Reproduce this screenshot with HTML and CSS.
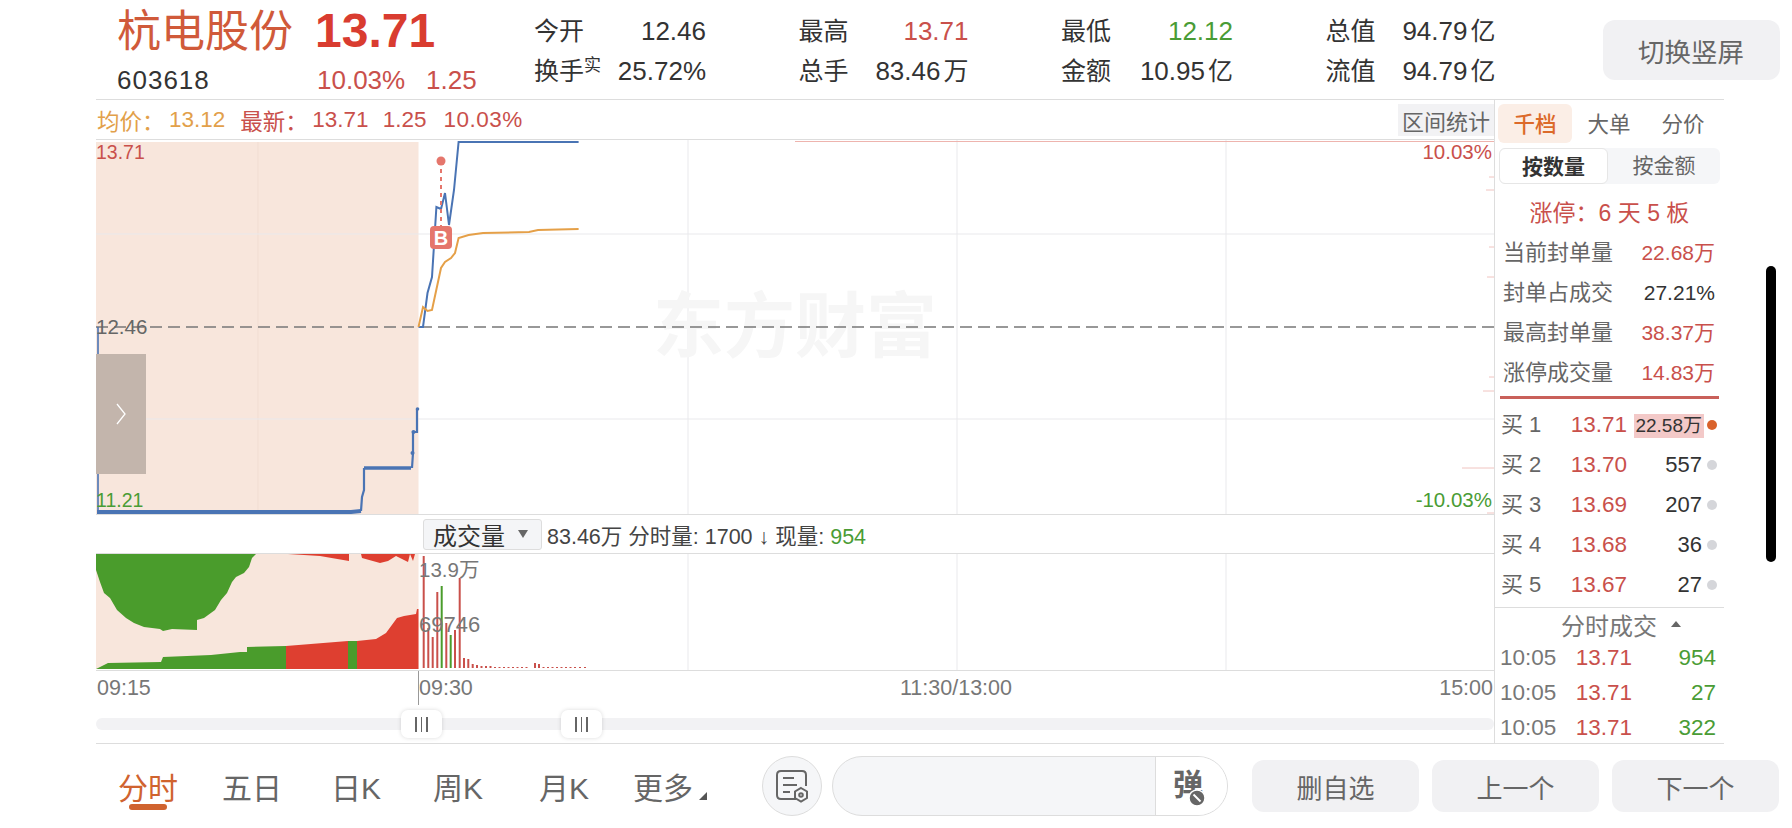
FILE: index.html
```html
<!DOCTYPE html>
<html lang="zh-CN">
<head>
    <meta charset="UTF-8">
    <meta name="viewport" content="width=device-width, initial-scale=1.0">
    <title>杭电股份 603618</title>
    <link rel="stylesheet" href="styles.css">
</head>
<body>
    <div class="screen">
        <!-- HEADER -->
        <header class="top">
            <div class="quote">
                <div class="quote-row first">
                    <span class="name">杭电股份</span>
                    <span class="price">13.71</span>
                </div>
                <div class="quote-row second">
                    <span class="code">603618</span>
                    <span class="change red">10.03%</span>
                    <span class="change-abs red">1.25</span>
                </div>
            </div>
            <div class="stats">
                <div class="stat"><span>今开</span><span>12.46</span></div>
                <div class="stat"><span>最高</span><span class="red">13.71</span></div>
                <div class="stat"><span>最低</span><span class="green">12.12</span></div>
                <div class="stat"><span>总值</span><span>94.79<span class="u">亿</span></span></div>
                <div class="stat"><span>换手<sup>实</sup></span><span>25.72%</span></div>
                <div class="stat"><span>总手</span><span>83.46<span class="u">万</span></span></div>
                <div class="stat"><span>金额</span><span>10.95<span class="u">亿</span></span></div>
                <div class="stat"><span>流值</span><span>94.79<span class="u">亿</span></span></div>
            </div>
            <button class="rotate-btn" type="button">切换竖屏</button>
        </header>

        <main class="main">
            <section class="chart-col">
                <div class="info-row">
                    <span class="orange info-label">均价：</span><span class="orange info-val">13.12</span>
                    <span class="red info-label">最新：</span>
                    <span class="red info-val">13.71</span>
                    <span class="red info-val">1.25</span>
                    <span class="red info-pct">10.03%</span>
                    <button class="range-btn" type="button">区间统计</button>
                </div>

                <!-- PRICE CHART -->
                <div class="price-chart">
                    <svg class="plot" viewBox="96 140 1398 374" width="1398" height="374">
                        <rect x="96" y="142" width="322.5" height="372" fill="#f8e6dc"/>
                        <path d="M258 142V512" stroke="#f1ddd2" fill="none"/>
                        <path d="M688 140V514M957 140V514M1226 140V514M96 234H1494M96 419H1494" stroke="#e9e9ec" fill="none"/>
                        <text class="watermark" x="795" y="351" text-anchor="middle">东方财富</text>
                        <path d="M795 141.5H1494" stroke="#eeb4ae" fill="none"/>
                        <path d="M1489 177H1494M1486 190H1494M1489 247H1494M1487 277H1494M1489 377H1494M1483 391H1494M1462 468H1494M1487 513H1494" stroke="#f0c4c0" fill="none"/>
                        <path d="M96 327H1494" stroke="#777" stroke-width="1.4" stroke-dasharray="12 6" fill="none"/>
                        <!-- pre-market -->
                        <path d="M98 327V512" stroke="#4a74b4" stroke-width="1.6" fill="none"/>
                        <path d="M97 512H351L361 511" stroke="#4a74b4" stroke-width="4" fill="none"/>
                        <path d="M361 511L362 497L364 490V468" stroke="#4a74b4" stroke-width="2.2" fill="none"/>
                        <path d="M364 468H411" stroke="#4a74b4" stroke-width="3.6" fill="none"/>
                        <path d="M412 468L413 453V432H417V409" stroke="#4a74b4" stroke-width="2.2" fill="none"/>
                        <circle cx="417.5" cy="409" r="1.8" fill="#4a74b4"/>
                        <circle cx="413.5" cy="432" r="2" fill="#4a74b4"/>
                        <circle cx="412.5" cy="453" r="2" fill="#4a74b4"/>
                        <!-- after open -->
                        <path d="M418.5 327H423L427.5 293L432 277L436.4 207L441 209L445 193L449 225L454 190L458.6 142H578.6" stroke="#4a74b4" stroke-width="2" fill="none"/>
                        <path d="M418.5 327L423 307L427.5 311L432 310L441 268L445 262L451 258L455 253L458.6 238L468.6 235L483 233L529 232L538 230L578.6 229" stroke="#e5a048" stroke-width="2" fill="none"/>
                        <!-- buy marker -->
                        <path d="M441 161V228" stroke="#e5766c" stroke-width="2" stroke-dasharray="4 4" fill="none"/>
                        <circle cx="441" cy="161" r="4.5" fill="#e5766c"/>
                        <rect x="430" y="226" width="22" height="23" rx="4" fill="#e5766c"/>
                        <text class="buy-mark" x="441" y="244.5" text-anchor="middle">B</text>
                    </svg>
                    <span class="axis-label left red top-val">13.71</span>
                    <span class="axis-label left mid-val">12.46</span>
                    <span class="axis-label left green low-val">11.21</span>
                    <span class="axis-label right red top-val">10.03%</span>
                    <span class="axis-label right green low-val">-10.03%</span>
                    <div class="drawer-tab">
                        <svg width="14" height="24" viewBox="0 0 14 24"><path d="M3 2L11 12L3 22" fill="none" stroke="#fff" stroke-width="1.3"/></svg>
                    </div>
                </div>

                <!-- VOLUME HEADER -->
                <div class="vol-head">
                    <div class="vol-select"><span>成交量</span><i class="tri-down"></i></div>
                    <span class="vol-text">83.46万 分时量: 1700 ↓ 现量: <span class="green">954</span></span>
                </div>

                <!-- VOLUME CHART -->
                <div class="vol-chart">
                    <svg class="plot" viewBox="96 554 1398 116" width="1398" height="116">
                        <rect x="96" y="554" width="322.5" height="115" fill="#f8e6dc"/>
                        <path d="M688 554V670M957 554V670M1226 554V670" stroke="#e9e9ec" fill="none"/>
                        <path d="M96 554V570L100 582L104 593L110 598L117 610L126 618L134 623L144 627L160 629L163 631L172 629L197 630V620L204 618L215 610L221 600L227 593L232 582L236 577L244 573L249 567L252 558L256 554Z" fill="#4a9c2c"/>
                        <path d="M288 554L320 556L349 561V554H361L362 558L380 563L388 561L396 556L402 559L408 562L410 554L413 561L415 554H418V554Z" fill="#de3f30"/>
                        <path d="M96 669L108 663L161 662L163 657L211 655L240 652H247V647L286 646V669Z" fill="#4a9c2c"/>
                        <path d="M286 646L348 641V669H286Z" fill="#de3f30"/>
                        <path d="M348 641H357V669H348Z" fill="#4a9c2c"/>
                        <path d="M357 641L376 639L386 633L397 618L404 616L416 614L417 609H418.5V669H357Z" fill="#de3f30"/>
                        <path d="M423.7 668V556M428.3 668V628M432.7 668V637M437.3 668V592M446.3 668V623M455 668V630M459.7 668V578M464 668V658M468.3 668V659M472.7 668V664M477 668V665M481.5 668V666M486 668V666M490.5 668V666M495 668V667M499.5 668V667M504 668V667M508.5 668V667M513 668V667M517.5 668V667M522 668V667M526.5 668V667M535 668V663M539 668V664M543.5 668V667M548 668V667M552.5 668V667M557 668V667M561.5 668V667M566 668V667M570.5 668V667M575 668V667M580 668V667M585 668V667" stroke="#c9504b" stroke-width="2" fill="none"/>
                        <path d="M441.7 668V586M450.7 668V635" stroke="#4a9c2c" stroke-width="2" fill="none"/>
                    </svg>
                    <span class="vol-label vol-max">13.9万</span>
                    <span class="vol-label vol-mid">69746</span>
                </div>

                <!-- TIME AXIS -->
                <div class="time-axis">
                    <span class="t-first">09:15</span>
                    <span class="t-open">09:30</span>
                    <span>11:30/13:00</span>
                    <span class="t-end">15:00</span>
                </div>
                <div class="scroller">
                    <div class="track"></div>
                    <div class="handle handle-a"><i></i><i></i><i></i></div>
                    <div class="handle handle-b"><i></i><i></i><i></i></div>
                </div>
            </section>

            <!-- RIGHT PANEL -->
            <aside class="panel">
                <div class="tabs">
                    <span class="tab active">千档</span>
                    <span class="tab">大单</span>
                    <span class="tab">分价</span>
                </div>
                <div class="seg">
                    <span class="seg-item on">按数量</span>
                    <span class="seg-item">按金额</span>
                </div>
                <div class="limit-title">涨停：6 天 5 板</div>
                <div class="limit-row"><span>当前封单量</span><span class="red">22.68万</span></div>
                <div class="limit-row"><span>封单占成交</span><span>27.21%</span></div>
                <div class="limit-row"><span>最高封单量</span><span class="red">38.37万</span></div>
                <div class="limit-row"><span>涨停成交量</span><span class="red">14.83万</span></div>
                <div class="red-rule"></div>
                <div class="bids">
                    <div class="bid"><span>买 1</span><span class="red">13.71</span><span class="qty"><b class="qty-bar">22.58万</b></span><i class="dot hot"></i></div>
                    <div class="bid"><span>买 2</span><span class="red">13.70</span><span class="qty">557</span><i class="dot"></i></div>
                    <div class="bid"><span>买 3</span><span class="red">13.69</span><span class="qty">207</span><i class="dot"></i></div>
                    <div class="bid"><span>买 4</span><span class="red">13.68</span><span class="qty">36</span><i class="dot"></i></div>
                    <div class="bid"><span>买 5</span><span class="red">13.67</span><span class="qty">27</span><i class="dot"></i></div>
                </div>
                <div class="trades-head"><span>分时成交</span><i class="tri-up"></i></div>
                <div class="trade"><span>10:05</span><span class="red">13.71</span><span class="green">954</span></div>
                <div class="trade"><span>10:05</span><span class="red">13.71</span><span class="green">27</span></div>
                <div class="trade"><span>10:05</span><span class="red">13.71</span><span class="green">322</span></div>
            </aside>
        </main>

        <!-- BOTTOM BAR -->
        <footer class="bottom">
            <nav class="periods">
                <span class="period active">分时</span>
                <span class="period p-five">五日</span>
                <span class="period p-day">日K</span>
                <span class="period p-week">周K</span>
                <span class="period p-month">月K</span>
                <span class="period p-more">更多<i class="tri-corner"></i></span>
            </nav>
            <div class="note-btn">
                <svg width="34" height="34" viewBox="0 0 34 34" fill="none" stroke="#666" stroke-width="2">
                    <path d="M21 30H6Q2 30 2 26V6Q2 2 6 2H27Q31 2 31 6V17"/>
                    <path d="M8 9H19M8 16H22M8 23H15"/>
                    <path d="M26 19L32 22.5V29L26 32.5L20 29V22.5Z"/>
                    <circle cx="26" cy="26" r="1.8"/>
                </svg>
            </div>
            <div class="danmu">
                <div class="danmu-input"></div>
                <div class="danmu-toggle">
                    <span>弹</span>
                    <svg class="danmu-off" width="18" height="18" viewBox="0 0 18 18"><circle cx="9" cy="9" r="8" fill="#666" stroke="#fff" stroke-width="1.5"/><path d="M5.5 5.5L12.5 12.5" stroke="#fff" stroke-width="2"/></svg>
                </div>
            </div>
            <div class="actions">
                <button class="act" type="button">删自选</button>
                <button class="act" type="button">上一个</button>
                <button class="act" type="button">下一个</button>
            </div>
        </footer>

        <div class="scrollbar"></div>
    </div>
</body>
</html>
```
FILE: styles.css
```css
* {
    box-sizing: border-box;
}
body {
    margin: 0;
    background: #fff;
    font-family: "Liberation Sans", "Noto Sans CJK SC", sans-serif;
    color: #333;
    overflow: hidden;
}
button {
    font-family: inherit;
    border: none;
    padding: 0;
}
.screen {
    position: relative;
    width: 1792px;
    height: 828px;
    overflow: hidden;
}
.red { color: #c9504b; }
.green { color: #4a9c35; }
.orange { color: #e2a04a; }

/* HEADER */
.top {
    display: flex;
    height: 99px;
    font-size: 26px;
}
.quote {
    width: 534px;
    padding-left: 117px;
}
.quote-row {
    display: flex;
    align-items: baseline;
}
.quote-row.first {
    height: 62px;
}
.quote-row.second {
    height: 37px;
}
.name {
    width: 198px;
    font-size: 44px;
    line-height: 62px;
    color: #d05a3a;
}
.price {
    font-size: 48px;
    font-weight: bold;
    line-height: 62px;
    color: #d93c30;
}
.code {
    width: 200px;
    font-size: 26px;
    line-height: 37px;
    letter-spacing: 1px;
}
.change {
    width: 109px;
}
.stats {
    display: grid;
    grid-template-columns: 172px 170px 172px 170px;
    column-gap: 92.5px;
    grid-auto-rows: 40px;
    padding-top: 11px;
}
.stat {
    display: flex;
    justify-content: space-between;
    align-items: baseline;
    line-height: 40px;
    white-space: nowrap;
}
.stat span:first-child {
    font-size: 25px;
}
.u {
    margin-left: 3px;
}
.stat sup {
    font-size: 17px;
    line-height: 1;
    vertical-align: 9px;
}
.rotate-btn {
    width: 177px;
    height: 60px;
    margin: 20px 0 0 107px;
    border-radius: 12px;
    background: #f1f1f3;
    color: #666;
    font-size: 26.5px;
}

/* MAIN */
.main {
    display: flex;
    width: 1628px;
    height: 645px;
    margin-left: 96px;
    border-top: 1px solid #ddd;
    border-bottom: 1px solid #ddd;
}
.chart-col {
    width: 1398px;
    flex: none;
}
.info-row {
    display: flex;
    align-items: center;
    height: 40px;
    border-bottom: 1px solid #ddd;
    font-size: 22.5px;
}
.info-label {
    margin-left: 1px;
    width: 72px;
}
.info-val {
    margin-right: 14px;
}
.info-pct {
    margin-left: 3px;
    letter-spacing: 0.5px;
}
.range-btn {
    width: 96px;
    height: 32px;
    margin: 0 0 0 auto;
    background: #f2f2f4;
    color: #666;
    font-size: 22px;
    white-space: nowrap;
}
.price-chart {
    position: relative;
    height: 375px;
    border-bottom: 1px solid #ddd;
}
.plot {
    display: block;
}
.watermark {
    font-size: 71px;
    font-weight: bold;
    fill: #f6f6f6;
}
.buy-mark {
    font-size: 20px;
    font-weight: bold;
    fill: #fff;
}
.axis-label {
    position: absolute;
    font-size: 19.5px;
    line-height: 24px;
}
.axis-label.left {
    left: 0;
}
.axis-label.right {
    right: 2px;
    font-size: 20.5px;
}
.top-val {
    top: 0;
}
.mid-val {
    top: 175px;
    font-size: 20.5px;
    color: #666;
}
.low-val {
    top: 348px;
}
.drawer-tab {
    position: absolute;
    left: 0;
    top: 214px;
    display: flex;
    align-items: center;
    justify-content: center;
    width: 50px;
    height: 120px;
    background: #c3b5ac;
}
.vol-head {
    display: flex;
    align-items: center;
    height: 39px;
    padding-left: 327px;
    border-bottom: 1px solid #ddd;
}
.vol-select {
    display: flex;
    align-items: center;
    width: 119px;
    height: 31px;
    padding-left: 9px;
    background: #f4f5f7;
    border: 1px solid #ddd;
    border-radius: 3px;
    font-size: 24px;
}
.tri-down {
    width: 0;
    height: 0;
    margin-left: 13px;
    border-left: 5px solid transparent;
    border-right: 5px solid transparent;
    border-top: 8px solid #666;
}
.vol-text {
    margin-left: 5px;
    font-size: 21.5px;
    color: #444;
}
.vol-chart {
    position: relative;
    height: 117px;
    border-bottom: 1px solid #ddd;
}
.vol-label {
    position: absolute;
    left: 323px;
    font-size: 20.5px;
    line-height: 24px;
    color: #777;
}
.vol-max {
    top: 4px;
}
.vol-mid {
    top: 59px;
    font-size: 22px;
}
.time-axis {
    display: flex;
    height: 35px;
    padding-right: 1px;
    font-size: 21.5px;
    line-height: 35px;
    color: #777;
}
.time-axis span {
    height: 34px;
}
.t-first {
    width: 322px;
    padding-left: 1px;
}
.t-open {
    width: 482px;
    border-left: 1px solid #999;
}
.t-end {
    margin-left: auto;
}
.scroller {
    position: relative;
    height: 37px;
    padding-top: 12px;
}
.track {
    height: 12px;
    border-radius: 6px;
    background: #f2f2f4;
}
.handle {
    position: absolute;
    top: 4px;
    display: flex;
    align-items: center;
    justify-content: center;
    gap: 4px;
    width: 41px;
    height: 28px;
    background: #fff;
    border-radius: 7px;
    box-shadow: 0 0 4px rgba(0,0,0,0.15);
}
.handle i {
    width: 1.5px;
    height: 15px;
    background: #666;
}
.handle-a {
    left: 305px;
}
.handle-b {
    left: 465px;
}

/* RIGHT PANEL */
.panel {
    width: 230px;
    flex: none;
    border-left: 1px solid #ddd;
}
.tabs {
    display: flex;
    height: 43px;
    padding: 4px 0 0 3px;
}
.tab {
    width: 74px;
    height: 39px;
    font-size: 21.5px;
    line-height: 42px;
    text-align: center;
    color: #666;
}
.tab.active {
    background: #fbeee6;
    border-radius: 6px;
    color: #dc6a2a;
    font-weight: 500;
}
.seg {
    display: flex;
    width: 221px;
    height: 36px;
    margin: 5px 0 0 4px;
    background: #f5f6f8;
    border-radius: 6px;
    font-size: 21px;
    line-height: 36px;
    color: #666;
}
.seg-item {
    flex: 1;
    text-align: center;
}
.seg-item.on {
    flex: none;
    width: 109px;
    background: #fff;
    border: 1px solid #e6e6e6;
    border-radius: 6px;
    font-weight: bold;
    color: #333;
}
.limit-title {
    height: 40px;
    margin-top: 9px;
    font-size: 23px;
    line-height: 40px;
    text-align: center;
    color: #c9504b;
}
.limit-row {
    display: flex;
    justify-content: space-between;
    align-items: baseline;
    height: 40px;
    padding: 0 9px 0 8px;
    font-size: 21px;
    line-height: 40px;
    color: #666;
}
.limit-row span:first-child {
    font-size: 22px;
}
.limit-row span:last-child:not(.red) {
    color: #333;
}
.red-rule {
    height: 3px;
    margin: 3px 5px 0;
    background: #c9605a;
}
.bids {
    margin-top: 6px;
    padding-bottom: 2px;
    border-bottom: 1px solid #ddd;
}
.bid {
    display: grid;
    grid-template-columns: 50px 76px 77px 1fr;
    align-items: baseline;
    height: 40px;
    padding-left: 6px;
    font-size: 22px;
    line-height: 40px;
    color: #666;
}
.bid .red,
.bid .qty {
    text-align: right;
}
.bid .red {
    font-size: 22.5px;
}
.qty {
    padding-right: 2px;
    color: #333;
}
.qty-bar {
    display: block;
    width: 70px;
    margin: 0 -2px 0 auto;
    padding-right: 2px;
    background: #f3c9c8;
    font-size: 19px;
    font-weight: normal;
    line-height: 24px;
    white-space: nowrap;
}
.dot {
    align-self: center;
    width: 10px;
    height: 10px;
    margin-left: 3px;
    border-radius: 50%;
    background: #d5d6da;
}
.dot.hot {
    background: #d9622b;
}
.trades-head {
    display: flex;
    align-items: center;
    height: 32px;
    padding-left: 66px;
    font-size: 24px;
    color: #777;
}
.tri-up {
    width: 0;
    height: 0;
    margin-left: 14px;
    border-left: 5px solid transparent;
    border-right: 5px solid transparent;
    border-bottom: 6px solid #666;
}
.trade {
    display: grid;
    grid-template-columns: 60px 72px 84px;
    height: 35px;
    padding-left: 5px;
    font-size: 22.5px;
    line-height: 35px;
    color: #777;
}
.trade span + span {
    text-align: right;
}

/* BOTTOM BAR */
.bottom {
    display: flex;
    align-items: center;
    height: 84px;
}
.periods {
    display: flex;
    width: 762px;
    padding-left: 118px;
    font-size: 30px;
    color: #666;
}
.period {
    position: relative;
    white-space: nowrap;
}
.period.active {
    color: #d0632f;
}
.period.active::after {
    content: "";
    position: absolute;
    left: 11px;
    right: 11px;
    bottom: -2px;
    height: 6px;
    border-radius: 3px;
    background: #d0632f;
}
.p-five { margin-left: 44px; }
.p-day { margin-left: 49px; }
.p-week { margin-left: 52px; }
.p-month { margin-left: 56px; }
.p-more { margin-left: 44px; }
.tri-corner {
    position: absolute;
    right: -14px;
    bottom: 8px;
    width: 0;
    height: 0;
    border-bottom: 8px solid #555;
    border-left: 8px solid transparent;
}
.note-btn {
    display: flex;
    align-items: center;
    justify-content: center;
    width: 60px;
    height: 60px;
    background: #f5f6f8;
    border: 1px solid #ddd;
    border-radius: 50%;
}
.danmu {
    display: flex;
    width: 396px;
    height: 60px;
    margin-left: 10px;
    background: #f5f6f8;
    border: 1px solid #ddd;
    border-radius: 30px;
    overflow: hidden;
}
.danmu-input {
    width: 323px;
    border-right: 1px solid #ddd;
}
.danmu-toggle {
    position: relative;
    flex: 1;
    background: #fff;
    padding-left: 17px;
    font-size: 30px;
    font-weight: bold;
    line-height: 56px;
    color: #666;
}
.danmu-off {
    position: absolute;
    left: 32px;
    top: 32px;
}
.actions {
    display: flex;
    gap: 13px;
    margin-left: 24px;
}
.act {
    width: 167px;
    height: 52px;
    background: #f1f1f3;
    border-radius: 12px;
    font-size: 26px;
    color: #666;
}
.scrollbar {
    position: absolute;
    left: 1766px;
    top: 266px;
    width: 10px;
    height: 296px;
    border-radius: 5px;
    background: #000;
}
```
